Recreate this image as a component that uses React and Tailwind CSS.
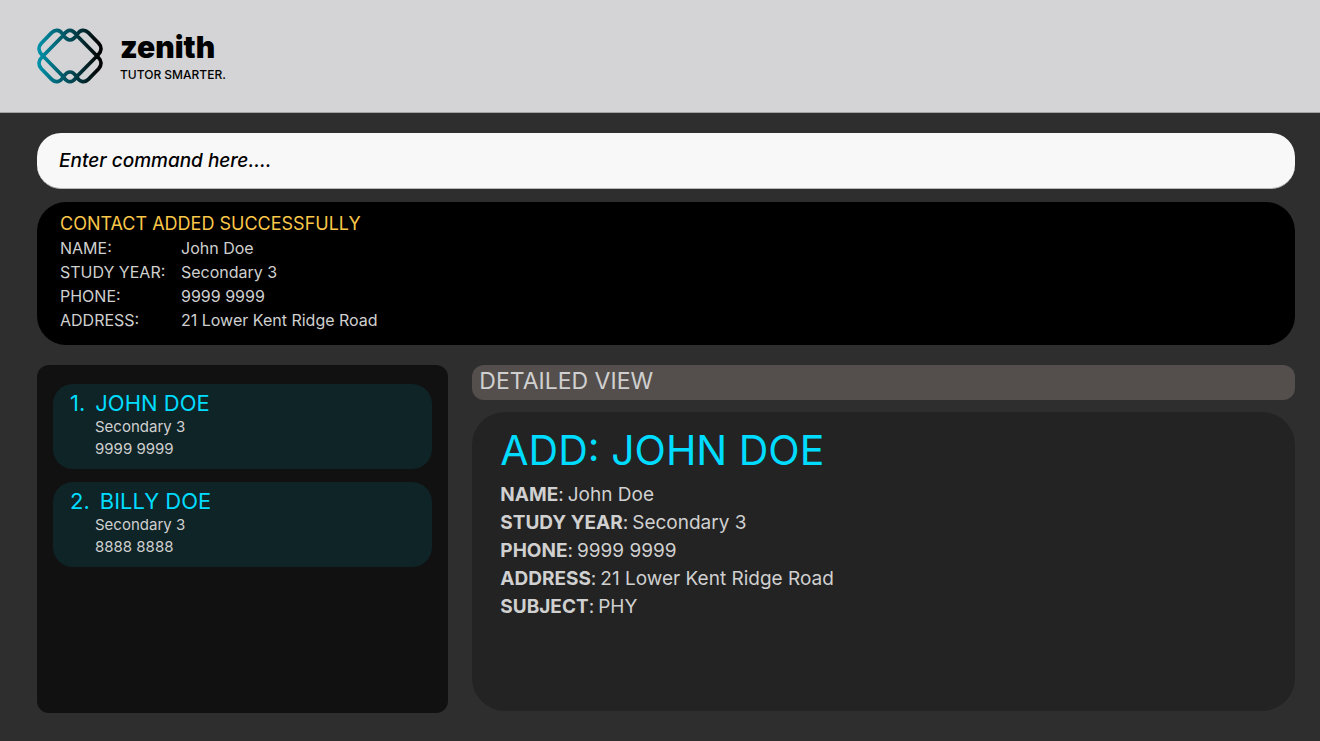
const contacts = [
  { name: "JOHN DOE", year: "Secondary 3", phone: "9999 9999" },
  { name: "BILLY DOE", year: "Secondary 3", phone: "8888 8888" },
];

const result = [
  ["NAME:", "John Doe"],
  ["STUDY YEAR:", "Secondary 3"],
  ["PHONE:", "9999 9999"],
  ["ADDRESS:", "21 Lower Kent Ridge Road"],
];

const details = [
  ["NAME", "John Doe"],
  ["STUDY YEAR", "Secondary 3"],
  ["PHONE", "9999 9999"],
  ["ADDRESS", "21 Lower Kent Ridge Road"],
  ["SUBJECT", "PHY"],
];

function Logo() {
  return (
    <svg className="h-14 w-[66px] shrink-0" viewBox="-99 -84 198 168" fill="none" aria-hidden="true">
      <defs>
        <linearGradient id="logo" gradientUnits="userSpaceOnUse" x1="-97" y1="0" x2="97" y2="0">
          <stop offset="0" stopColor="#0092aa" />
          <stop offset="0.5" stopColor="#004a57" />
          <stop offset="0.9" stopColor="#050b0c" />
          <stop offset="1" stopColor="#000000" />
        </linearGradient>
      </defs>
      <path
        stroke="url(#logo)"
        strokeWidth="11"
        d={
          "M0 -48 C-11 -48 -16 -57 -21 -64 C-30 -79 -44 -81 -55 -70 L-86 -38 C-96 -27 -95 -14 -84 -3 L-22 60 C-15 69 -11 77 0 77" +
          " M0 -48 C11 -48 16 -57 21 -64 C30 -79 44 -81 55 -70 L86 -38 C96 -27 95 -14 84 -3 L22 60 C15 69 11 77 0 77" +
          " M0 48 C-11 48 -16 57 -21 64 C-30 79 -44 81 -55 70 L-86 38 C-96 27 -95 14 -84 3 L-22 -60 C-15 -69 -11 -77 0 -77" +
          " M0 48 C11 48 16 57 21 64 C30 79 44 81 55 70 L86 38 C96 27 95 14 84 3 L22 -60 C15 -69 11 -77 0 -77"
        }
      />
    </svg>
  );
}

function Header() {
  return (
    <header className="flex h-[113px] items-center gap-[17px] border-b border-[#a3a3a3] bg-[#d4d4d6] px-[37px] text-black">
      <Logo />
      <div className="pt-[2px]">
        <p className="text-[30px] leading-9 font-black">zenith</p>
        <p className="text-[12px] leading-5 font-medium">TUTOR SMARTER.</p>
      </div>
    </header>
  );
}

function ResultBox() {
  return (
    <section className="rounded-[29px] bg-black px-[23px] pt-[10px] pb-[13px] text-[#d0d0d0]">
      <h2 className="text-lg leading-6 text-[#fac748]">CONTACT ADDED SUCCESSFULLY</h2>
      <dl className="text-base leading-6">
        {result.map(([label, value]) => (
          <div key={label} className="flex">
            <dt className="w-[121px] shrink-0">{label}</dt>
            <dd>{value}</dd>
          </div>
        ))}
      </dl>
    </section>
  );
}

function ContactList() {
  return (
    <ol className="flex flex-col gap-[13px] rounded-xl bg-[#111111] px-4 py-[19px]">
      {contacts.map((c, i) => (
        <li key={c.name} className="rounded-[20px] bg-[#0f2426] px-[17px] pt-[6px] pb-[9px]">
          <h3 className="flex gap-[10px] text-[22px] leading-[26px] text-[#00dcff]">
            <span>{i + 1}.</span>
            <span>{c.name}</span>
          </h3>
          <div className="pl-[25px] text-[15px] leading-[22px] text-[#d0d0d0]">
            <p>{c.year}</p>
            <p>{c.phone}</p>
          </div>
        </li>
      ))}
    </ol>
  );
}

function DetailedView() {
  return (
    <section className="flex flex-col gap-3 text-[#d0d0d0]">
      <h2 className="rounded-xl bg-[#544f4d] px-[7px] pb-[3px] text-[23px] leading-8">DETAILED VIEW</h2>
      <div className="mb-[2px] flex-1 rounded-[33px] bg-[#232323] px-7 py-[14px]">
        <h1 className="text-[41px] leading-[48px] text-[#00dcff]">ADD: JOHN DOE</h1>
        <dl className="mt-[7px] text-[19px] leading-7">
          {details.map(([label, value]) => (
            <div key={label} className="flex gap-1">
              <dt>
                <span className="font-bold">{label}</span>:
              </dt>
              <dd>{value}</dd>
            </div>
          ))}
        </dl>
      </div>
    </section>
  );
}

export default function App() {
  return (
    <div className="flex min-h-screen flex-col bg-[#2e2e2e] font-['Inter',sans-serif]">
      <Header />
      <main className="flex flex-1 flex-col pt-5 pr-[25px] pb-7 pl-[37px]">
        <input
          type="text"
          aria-label="Command"
          placeholder="Enter command here...."
          className="mb-[13px] h-14 w-full rounded-[24px] border-b border-[#b8b8b8] bg-[#f8f8f8] px-[22px] text-[19px] font-medium text-black italic outline-none placeholder:text-black placeholder:opacity-100"
        />
        <ResultBox />
        <div className="mt-5 grid flex-1 grid-cols-[1fr_2fr] gap-6">
          <ContactList />
          <DetailedView />
        </div>
      </main>
    </div>
  );
}
